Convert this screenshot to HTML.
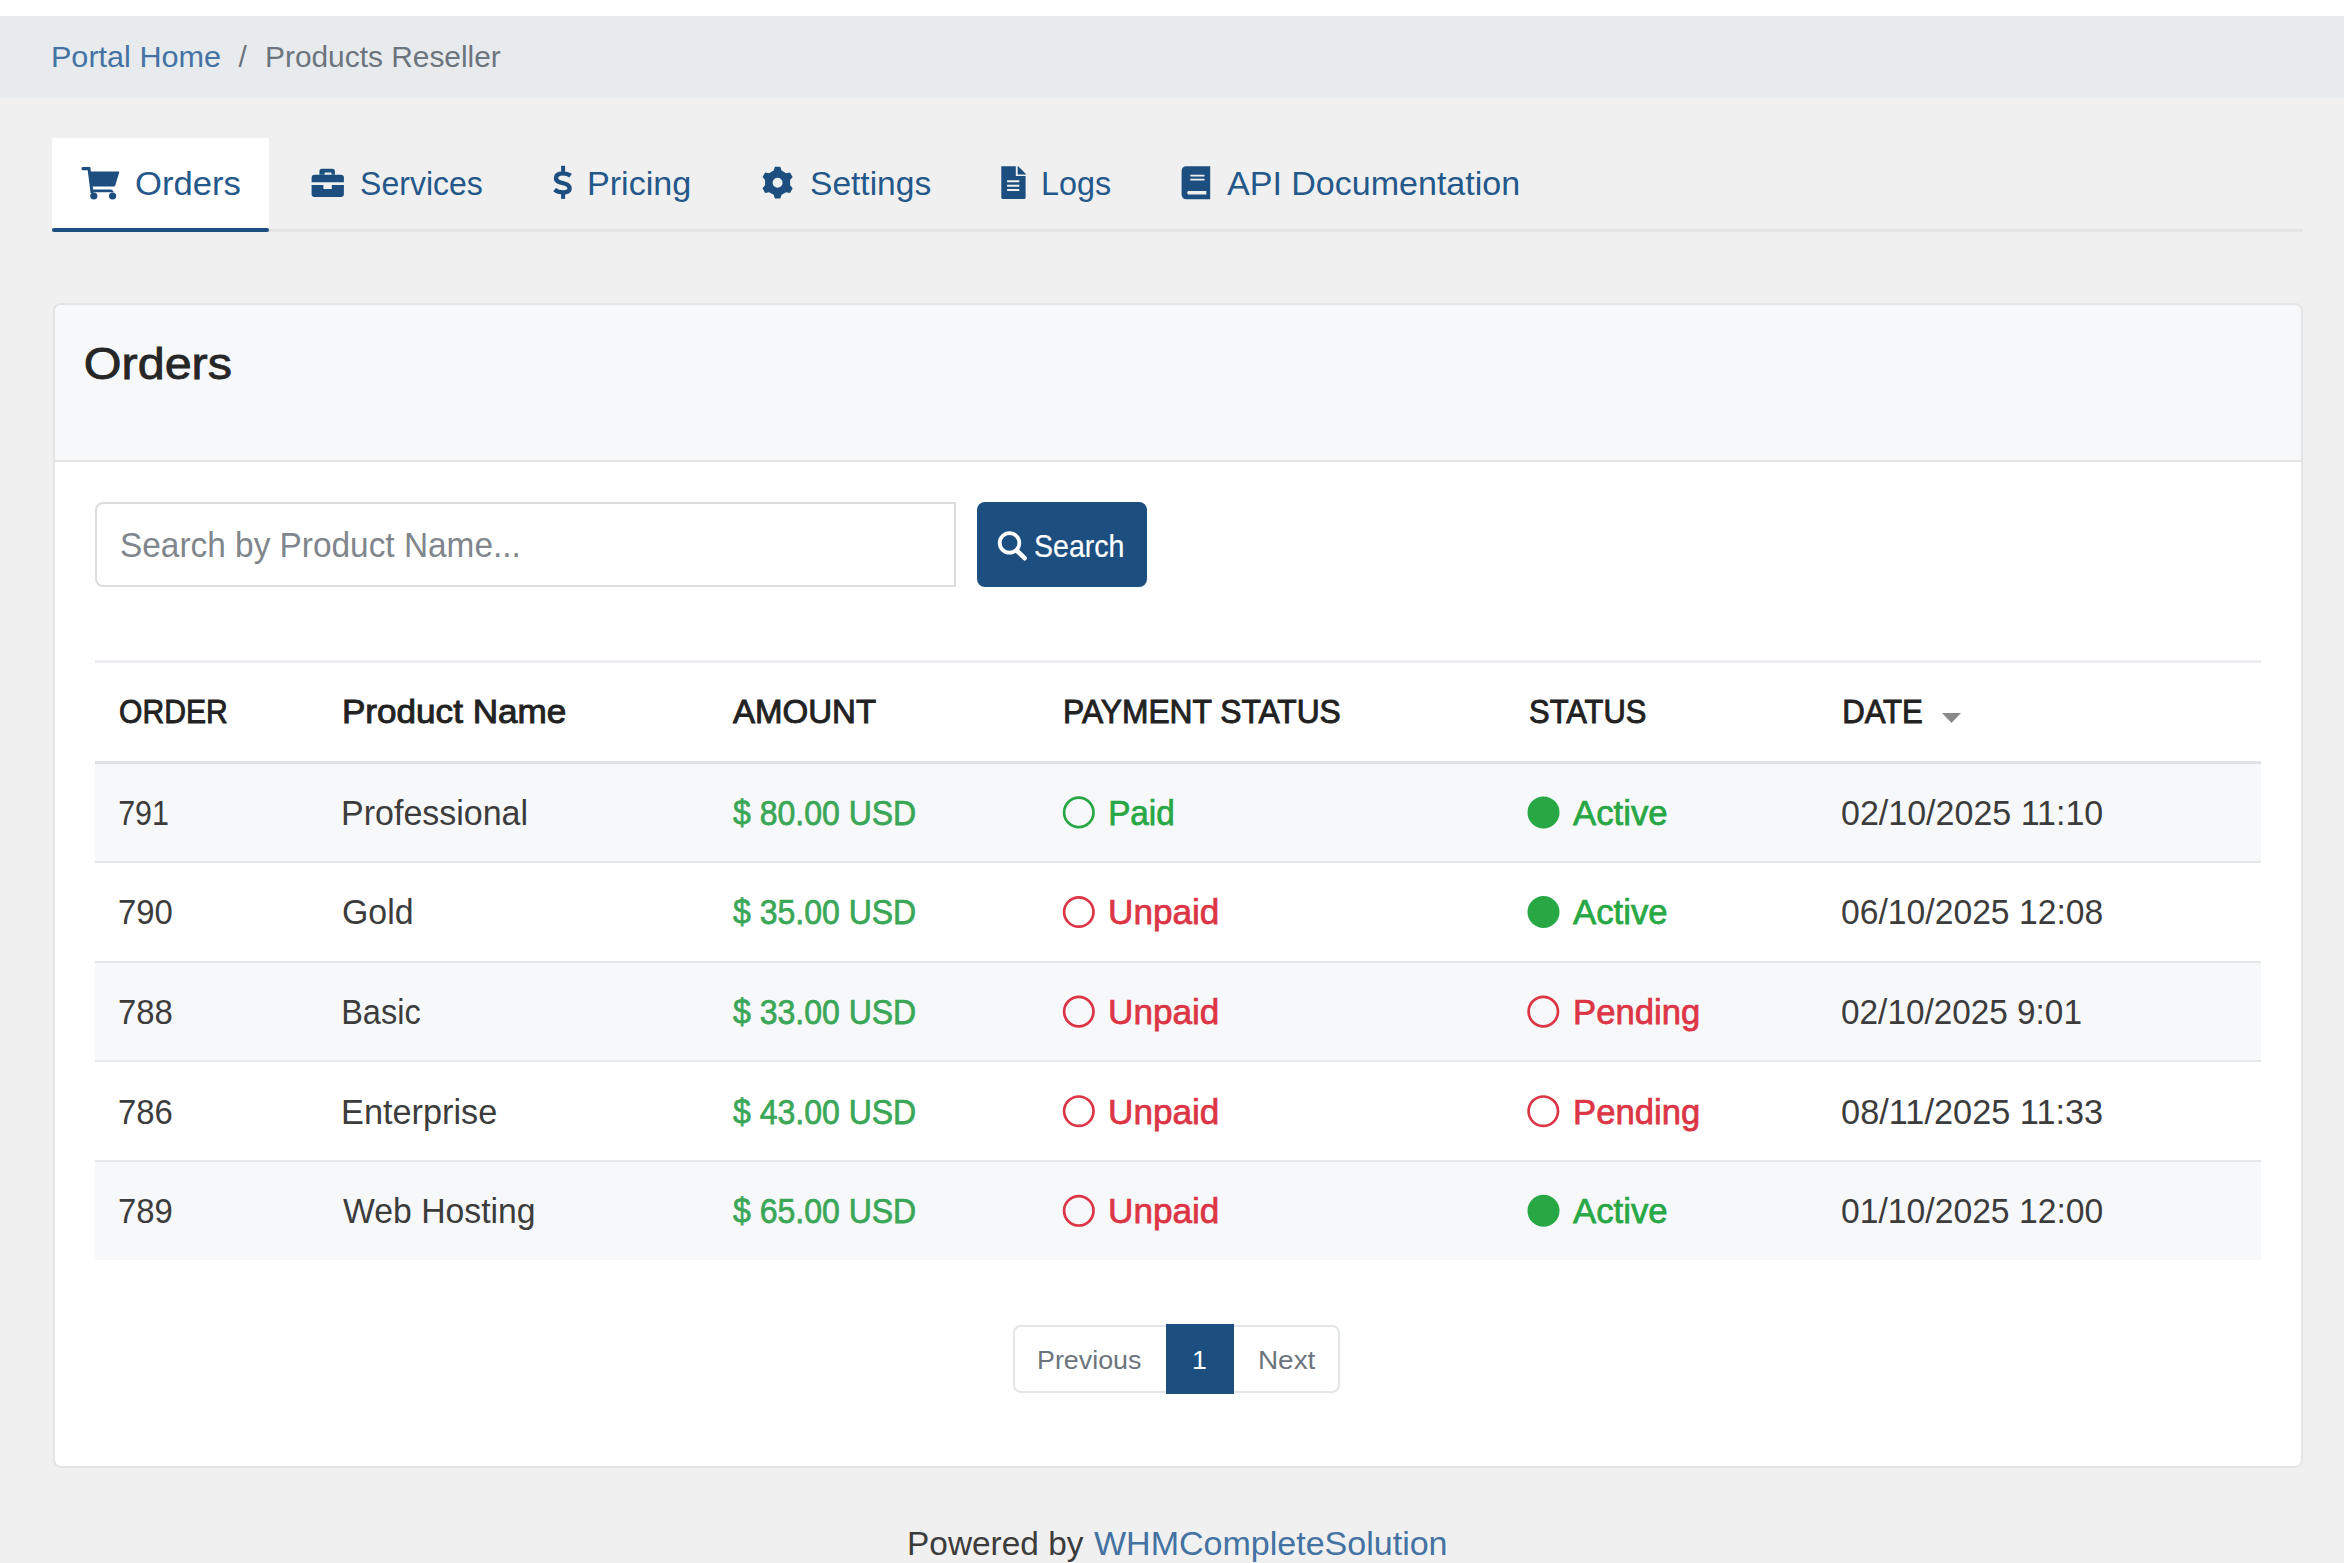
<!DOCTYPE html>
<html><head><meta charset="utf-8"><title>Orders</title>
<style>
html,body{margin:0;padding:0;}
body{width:2344px;height:1563px;overflow:hidden;position:relative;background:#f0f0f0;font-family:"Liberation Sans",sans-serif;}
.b{position:absolute;box-sizing:border-box;}
.t{position:absolute;white-space:nowrap;font-family:"Liberation Sans",sans-serif;}
.ov{position:absolute;left:0;top:0;}
</style></head><body>
<div class="b" style="left:0;top:0;width:2344px;height:16px;background:#ffffff"></div>
<div class="b" style="left:0;top:16px;width:2344px;height:82px;background:#e8ebee"></div>
<div class="b" style="left:52px;top:229px;width:2251px;height:3px;background:#e3e3e3"></div>
<div class="b" style="left:52px;top:138px;width:217px;height:90px;background:#ffffff"></div>
<div class="b" style="left:52px;top:228px;width:217px;height:4px;background:#1c4f80;border-radius:2px"></div>
<div class="b" style="left:53px;top:303px;width:2250px;height:1165px;background:#ffffff;border:2px solid #e4e4e4;border-radius:8px;overflow:hidden">
  <div style="height:155px;background:#f7f8fa;border-bottom:2px solid #e4e4e4"></div>
</div>
<div class="b" style="left:95px;top:502px;width:861px;height:85px;background:#fff;border:2px solid #dcdcdc;border-radius:8px 0 0 8px"></div>
<div class="b" style="left:977px;top:502px;width:170px;height:85px;background:#1c4f80;border-radius:8px"></div>
<div class="b" style="left:95px;top:660px;width:2166px;height:3px;background:#eceef1"></div>
<div class="b" style="left:95px;top:764px;width:2166px;height:98px;background:#f7f8fa"></div>
<div class="b" style="left:95px;top:963px;width:2166px;height:98px;background:#f7f8fa"></div>
<div class="b" style="left:95px;top:1162px;width:2166px;height:98px;background:#f7f8fa"></div>
<div class="b" style="left:95px;top:761px;width:2166px;height:3px;background:#dee2e6"></div>
<div class="b" style="left:95px;top:861px;width:2166px;height:2px;background:#e5e8eb"></div>
<div class="b" style="left:95px;top:961px;width:2166px;height:2px;background:#e5e8eb"></div>
<div class="b" style="left:95px;top:1060px;width:2166px;height:2px;background:#e5e8eb"></div>
<div class="b" style="left:95px;top:1160px;width:2166px;height:2px;background:#e5e8eb"></div>
<div class="b" style="left:1013px;top:1325px;width:327px;height:68px;background:#fff;border:2px solid #e3e6e9;border-radius:8px"></div>
<div class="b" style="left:1166px;top:1324px;width:68px;height:70px;background:#1c4f80"></div>
<svg class="ov" width="2344" height="1563" viewBox="0 0 2344 1563">
<g fill="#1c4f80">
 <!-- cart -->
 <rect x="81.5" y="167" width="8.5" height="3.2" rx="1.2"/>
 <path d="M87.3,167 L90.3,167 L93.6,193 L90.6,193 Z"/>
 <path d="M90.2,171.5 L118.8,171.5 Q119.4,171.6 119.2,172.4 L115.2,185.6 Q114.9,186.5 114,186.5 L92.2,186.5 Z"/>
 <path d="M91.5,189.6 L110.5,189.6 Q112,189.6 113,191 L114,192.3 L91.5,192.3 Z"/>
 <circle cx="93.8" cy="196" r="3.6"/>
 <circle cx="112.6" cy="196" r="3.6"/>
 <!-- briefcase -->
 <path fill-rule="evenodd" d="M322,168.8 L332.4,168.8 Q334.9,168.8 334.9,171.3 L334.9,174.7 L331.5,174.7 L331.5,172.6 L324.6,172.6 L324.6,174.7 L319.4,174.7 L319.4,171.3 Q319.4,168.8 322,168.8 Z"/>
 <path d="M314.6,174.7 L340.9,174.7 Q343.9,174.7 343.9,177.7 L343.9,182.2 L311.6,182.2 L311.6,177.7 Q311.6,174.7 314.6,174.7 Z"/>
 <path d="M311.6,185 L323.4,185 L323.4,189.1 L331.8,189.1 L331.8,185 L343.9,185 L343.9,194.1 Q343.9,197.1 340.9,197.1 L314.6,197.1 Q311.6,197.1 311.6,194.1 Z"/>
 <!-- gear -->
 <path fill-rule="evenodd" d="M773.64,170.53 L774.92,166.83 L780.28,166.83 L781.56,170.53 L786.16,173.19 L790.01,172.44 L792.69,177.09 L790.12,180.04 L790.12,185.36 L792.69,188.31 L790.01,192.96 L786.16,192.21 L781.56,194.87 L780.28,198.57 L774.92,198.57 L773.64,194.87 L769.04,192.21 L765.19,192.96 L762.51,188.31 L765.08,185.36 L765.08,180.04 L762.51,177.09 L765.19,172.44 L769.04,173.19 Z M782.60,182.70 A5.0,5.0 0 1,0 772.60,182.70 A5.0,5.0 0 1,0 782.60,182.70 Z"/>
 <!-- file -->
 <path fill-rule="evenodd" d="M1001.3,166.3 L1015.8,166.3 L1015.8,176.1 L1025.6,176.1 L1025.6,197.4 Q1025.6,198.9 1024.1,198.9 L1002.8,198.9 Q1001.3,198.9 1001.3,197.4 Z M1007.1,180.3 L1019.3,180.3 L1019.3,182.3 L1007.1,182.3 Z M1007.1,184.8 L1019.3,184.8 L1019.3,186.8 L1007.1,186.8 Z M1007.1,189 L1019.3,189 L1019.3,191 L1007.1,191 Z"/>
 <path d="M1017.7,165.8 L1026.4,174.4 L1017.7,174.4 Z"/>
 <!-- book -->
 <path fill-rule="evenodd" d="M1186.6,166.3 L1210.2,166.3 L1210.2,199.2 L1186.6,199.2 Q1181.6,199.2 1181.6,194.2 L1181.6,171.3 Q1181.6,166.3 1186.6,166.3 Z M1190.5,174.8 L1204.3,174.8 Q1205,175.7 1204.3,176.6 L1190.5,176.6 Q1189.8,175.7 1190.5,174.8 Z M1190.5,178.7 L1204.3,178.7 Q1205,179.6 1204.3,180.5 L1190.5,180.5 Q1189.8,179.6 1190.5,178.7 Z M1188,191.1 L1206.3,191.1 L1206.3,194.6 L1188,194.6 Q1186.2,192.85 1188,191.1 Z"/>
 <!-- dollar -->
 <path fill="none" stroke="#1c4f80" stroke-width="4.4" stroke-linecap="butt" d="M570.6,175.6 Q567.5,173.4 562.8,173.4 Q556,173.4 556,178.2 Q556,181.8 563,183.2 Q569.6,184.6 569.6,188.6 Q569.6,192.4 563,192.4 Q558,192.4 554.6,189.6"/>
 <rect x="561.1" y="165.8" width="4" height="6"/>
 <rect x="561.1" y="193.6" width="4" height="5.3"/>
</g>
<!-- search icon -->
<circle cx="1009.5" cy="542.9" r="9.8" fill="none" stroke="#ffffff" stroke-width="3.8"/>
<path d="M1017.2,551 L1024.6,558.2" stroke="#ffffff" stroke-width="4.6" stroke-linecap="round"/>
<!-- sort caret -->
<path d="M1942,713 L1961,713 L1951.5,723 Z" fill="#8a8a8a"/>
<circle cx="1078.8" cy="812.4" r="14.7" fill="none" stroke="#28a745" stroke-width="2.7"/><circle cx="1543.5" cy="812.4" r="16" fill="#28a745"/><circle cx="1078.8" cy="912.0" r="14.7" fill="none" stroke="#dc3545" stroke-width="2.7"/><circle cx="1543.5" cy="912.0" r="16" fill="#28a745"/><circle cx="1078.8" cy="1011.6" r="14.7" fill="none" stroke="#dc3545" stroke-width="2.7"/><circle cx="1543.3" cy="1011.6" r="14.7" fill="none" stroke="#dc3545" stroke-width="2.7"/><circle cx="1078.8" cy="1111.2" r="14.7" fill="none" stroke="#dc3545" stroke-width="2.7"/><circle cx="1543.3" cy="1111.2" r="14.7" fill="none" stroke="#dc3545" stroke-width="2.7"/><circle cx="1078.8" cy="1210.8" r="14.7" fill="none" stroke="#dc3545" stroke-width="2.7"/><circle cx="1543.5" cy="1210.8" r="16" fill="#28a745"/>
</svg>
<span class="t" style="left:50.7px;top:41.5px;font-size:30px;line-height:30px;font-weight:400;color:#4372a3;transform:scaleX(1.0198);transform-origin:2.0px 0">Portal Home</span>
<span class="t" style="left:238.6px;top:41.5px;font-size:30px;line-height:30px;font-weight:400;color:#6c757d">/</span>
<span class="t" style="left:265.0px;top:41.5px;font-size:30px;line-height:30px;font-weight:400;color:#6c757d;transform:scaleX(0.9959);transform-origin:2.0px 0">Products Reseller</span>
<span class="t" style="left:134.5px;top:166.0px;font-size:34px;line-height:34px;font-weight:400;color:#24588a;transform:scaleX(1.0195);transform-origin:1.0px 0">Orders</span>
<span class="t" style="left:359.8px;top:166.0px;font-size:34px;line-height:34px;font-weight:400;color:#24588a;transform:scaleX(0.9418);transform-origin:1.0px 0">Services</span>
<span class="t" style="left:587.2px;top:166.0px;font-size:34px;line-height:34px;font-weight:400;color:#24588a;transform:scaleX(1.0038);transform-origin:2.0px 0">Pricing</span>
<span class="t" style="left:809.8px;top:166.0px;font-size:34px;line-height:34px;font-weight:400;color:#24588a;transform:scaleX(0.9863);transform-origin:1.0px 0">Settings</span>
<span class="t" style="left:1040.8px;top:166.0px;font-size:34px;line-height:34px;font-weight:400;color:#24588a;transform:scaleX(0.9501);transform-origin:2.0px 0">Logs</span>
<span class="t" style="left:1227.2px;top:166.0px;font-size:34px;line-height:34px;font-weight:400;color:#24588a;transform:scaleX(1.0006);transform-origin:0.0px 0">API Documentation</span>
<span class="t" style="left:83.9px;top:342.0px;font-size:44px;line-height:44px;font-weight:400;color:#262626;-webkit-text-stroke:0.8px #262626;transform:scaleX(1.1023);transform-origin:2.0px 0">Orders</span>
<span class="t" style="left:119.8px;top:526.9px;font-size:35px;line-height:35px;font-weight:400;color:#80868c;transform:scaleX(0.9537);transform-origin:1.0px 0">Search by Product Name...</span>
<span class="t" style="left:1034.4px;top:531.3px;font-size:30.5px;line-height:30px;font-weight:400;color:#ffffff;-webkit-text-stroke:0.2px #ffffff;transform:scaleX(0.9353);transform-origin:1.0px 0">Search</span>
<span class="t" style="left:118.7px;top:694.6px;font-size:33.5px;line-height:34px;font-weight:400;color:#222222;-webkit-text-stroke:0.95px #222222;transform:scaleX(0.8978);transform-origin:1.0px 0">ORDER</span>
<span class="t" style="left:342.0px;top:694.6px;font-size:33.5px;line-height:34px;font-weight:400;color:#222222;-webkit-text-stroke:0.95px #222222;transform:scaleX(1.0483);transform-origin:2.0px 0">Product Name</span>
<span class="t" style="left:732.5px;top:694.6px;font-size:33.5px;line-height:34px;font-weight:400;color:#222222;-webkit-text-stroke:0.95px #222222;transform:scaleX(0.9860);transform-origin:0.0px 0">AMOUNT</span>
<span class="t" style="left:1063.2px;top:694.6px;font-size:33.5px;line-height:34px;font-weight:400;color:#222222;-webkit-text-stroke:0.95px #222222;transform:scaleX(0.9483);transform-origin:2.0px 0">PAYMENT STATUS</span>
<span class="t" style="left:1528.5px;top:694.6px;font-size:33.5px;line-height:34px;font-weight:400;color:#222222;-webkit-text-stroke:0.95px #222222;transform:scaleX(0.9222);transform-origin:1.0px 0">STATUS</span>
<span class="t" style="left:1841.5px;top:694.6px;font-size:33.5px;line-height:34px;font-weight:400;color:#222222;-webkit-text-stroke:0.95px #222222;transform:scaleX(0.9294);transform-origin:2.0px 0">DATE</span>
<span class="t" style="left:118.0px;top:794.7px;font-size:35.5px;line-height:36px;font-weight:400;color:#3c3c3c;transform:scaleX(0.8576);transform-origin:1.0px 0">791</span>
<span class="t" style="left:340.8px;top:794.7px;font-size:35.5px;line-height:36px;font-weight:400;color:#3c3c3c;transform:scaleX(0.9568);transform-origin:2.0px 0">Professional</span>
<span class="t" style="left:732.8px;top:794.7px;font-size:35.5px;line-height:36px;font-weight:400;color:#3aa757;-webkit-text-stroke:0.75px #3aa757;transform:scaleX(0.9013);transform-origin:0.0px 0">$ 80.00 USD</span>
<span class="t" style="left:1107.9px;top:794.7px;font-size:35.5px;line-height:36px;font-weight:400;color:#28a745;-webkit-text-stroke:0.75px #28a745;transform:scaleX(0.9374);transform-origin:2.0px 0">Paid</span>
<span class="t" style="left:1572.7px;top:794.7px;font-size:35.5px;line-height:36px;font-weight:400;color:#28a745;-webkit-text-stroke:0.75px #28a745;transform:scaleX(0.9795);transform-origin:0.0px 0">Active</span>
<span class="t" style="left:1841.0px;top:794.7px;font-size:35.5px;line-height:36px;font-weight:400;color:#3c3c3c;transform:scaleX(0.9577);transform-origin:1.0px 0">02/10/2025 11:10</span>
<span class="t" style="left:118.0px;top:894.3px;font-size:35.5px;line-height:36px;font-weight:400;color:#3c3c3c;transform:scaleX(0.9254);transform-origin:1.0px 0">790</span>
<span class="t" style="left:341.8px;top:894.3px;font-size:35.5px;line-height:36px;font-weight:400;color:#3c3c3c;transform:scaleX(0.9523);transform-origin:1.0px 0">Gold</span>
<span class="t" style="left:732.8px;top:894.3px;font-size:35.5px;line-height:36px;font-weight:400;color:#3aa757;-webkit-text-stroke:0.75px #3aa757;transform:scaleX(0.9013);transform-origin:0.0px 0">$ 35.00 USD</span>
<span class="t" style="left:1107.9px;top:894.3px;font-size:35.5px;line-height:36px;font-weight:400;color:#dc3545;-webkit-text-stroke:0.75px #dc3545;transform:scaleX(0.9899);transform-origin:2.0px 0">Unpaid</span>
<span class="t" style="left:1572.7px;top:894.3px;font-size:35.5px;line-height:36px;font-weight:400;color:#28a745;-webkit-text-stroke:0.75px #28a745;transform:scaleX(0.9795);transform-origin:0.0px 0">Active</span>
<span class="t" style="left:1841.0px;top:894.3px;font-size:35.5px;line-height:36px;font-weight:400;color:#3c3c3c;transform:scaleX(0.9486);transform-origin:1.0px 0">06/10/2025 12:08</span>
<span class="t" style="left:118.0px;top:993.9px;font-size:35.5px;line-height:36px;font-weight:400;color:#3c3c3c;transform:scaleX(0.9254);transform-origin:1.0px 0">788</span>
<span class="t" style="left:340.8px;top:993.9px;font-size:35.5px;line-height:36px;font-weight:400;color:#3c3c3c;transform:scaleX(0.9160);transform-origin:2.0px 0">Basic</span>
<span class="t" style="left:732.8px;top:993.9px;font-size:35.5px;line-height:36px;font-weight:400;color:#3aa757;-webkit-text-stroke:0.75px #3aa757;transform:scaleX(0.9013);transform-origin:0.0px 0">$ 33.00 USD</span>
<span class="t" style="left:1107.9px;top:993.9px;font-size:35.5px;line-height:36px;font-weight:400;color:#dc3545;-webkit-text-stroke:0.75px #dc3545;transform:scaleX(0.9899);transform-origin:2.0px 0">Unpaid</span>
<span class="t" style="left:1572.8px;top:993.9px;font-size:35.5px;line-height:36px;font-weight:400;color:#dc3545;-webkit-text-stroke:0.75px #dc3545;transform:scaleX(0.9757);transform-origin:2.0px 0">Pending</span>
<span class="t" style="left:1841.0px;top:993.9px;font-size:35.5px;line-height:36px;font-weight:400;color:#3c3c3c;transform:scaleX(0.9385);transform-origin:1.0px 0">02/10/2025 9:01</span>
<span class="t" style="left:118.0px;top:1093.5px;font-size:35.5px;line-height:36px;font-weight:400;color:#3c3c3c;transform:scaleX(0.9254);transform-origin:1.0px 0">786</span>
<span class="t" style="left:340.8px;top:1093.5px;font-size:35.5px;line-height:36px;font-weight:400;color:#3c3c3c;transform:scaleX(0.9651);transform-origin:2.0px 0">Enterprise</span>
<span class="t" style="left:732.8px;top:1093.5px;font-size:35.5px;line-height:36px;font-weight:400;color:#3aa757;-webkit-text-stroke:0.75px #3aa757;transform:scaleX(0.9013);transform-origin:0.0px 0">$ 43.00 USD</span>
<span class="t" style="left:1107.9px;top:1093.5px;font-size:35.5px;line-height:36px;font-weight:400;color:#dc3545;-webkit-text-stroke:0.75px #dc3545;transform:scaleX(0.9899);transform-origin:2.0px 0">Unpaid</span>
<span class="t" style="left:1572.8px;top:1093.5px;font-size:35.5px;line-height:36px;font-weight:400;color:#dc3545;-webkit-text-stroke:0.75px #dc3545;transform:scaleX(0.9757);transform-origin:2.0px 0">Pending</span>
<span class="t" style="left:1841.0px;top:1093.5px;font-size:35.5px;line-height:36px;font-weight:400;color:#3c3c3c;transform:scaleX(0.9671);transform-origin:1.0px 0">08/11/2025 11:33</span>
<span class="t" style="left:118.0px;top:1193.1px;font-size:35.5px;line-height:36px;font-weight:400;color:#3c3c3c;transform:scaleX(0.9254);transform-origin:1.0px 0">789</span>
<span class="t" style="left:342.8px;top:1193.1px;font-size:35.5px;line-height:36px;font-weight:400;color:#3c3c3c;transform:scaleX(0.9505);transform-origin:0.0px 0">Web Hosting</span>
<span class="t" style="left:732.8px;top:1193.1px;font-size:35.5px;line-height:36px;font-weight:400;color:#3aa757;-webkit-text-stroke:0.75px #3aa757;transform:scaleX(0.9013);transform-origin:0.0px 0">$ 65.00 USD</span>
<span class="t" style="left:1107.9px;top:1193.1px;font-size:35.5px;line-height:36px;font-weight:400;color:#dc3545;-webkit-text-stroke:0.75px #dc3545;transform:scaleX(0.9899);transform-origin:2.0px 0">Unpaid</span>
<span class="t" style="left:1572.7px;top:1193.1px;font-size:35.5px;line-height:36px;font-weight:400;color:#28a745;-webkit-text-stroke:0.75px #28a745;transform:scaleX(0.9795);transform-origin:0.0px 0">Active</span>
<span class="t" style="left:1841.0px;top:1193.1px;font-size:35.5px;line-height:36px;font-weight:400;color:#3c3c3c;transform:scaleX(0.9486);transform-origin:1.0px 0">01/10/2025 12:00</span>
<span class="t" style="left:1037.2px;top:1346.8px;font-size:26.7px;line-height:27px;font-weight:400;color:#6c757d;transform:scaleX(1.0060);transform-origin:2.0px 0">Previous</span>
<span class="t" style="left:1192.0px;top:1346.8px;font-size:26.7px;line-height:27px;font-weight:400;color:#ffffff">1</span>
<span class="t" style="left:1257.6px;top:1346.8px;font-size:26.7px;line-height:27px;font-weight:400;color:#6c757d;transform:scaleX(1.0475);transform-origin:2.0px 0">Next</span>
<span class="t" style="left:906.6px;top:1526.2px;font-size:34px;line-height:34px;font-weight:400;color:#3c3c3c;transform:scaleX(0.9823);transform-origin:2.0px 0">Powered by</span>
<span class="t" style="left:1094.0px;top:1526.2px;font-size:34px;line-height:34px;font-weight:400;color:#4372a3;transform:scaleX(1.0005);transform-origin:0.0px 0">WHMCompleteSolution</span>
</body></html>
